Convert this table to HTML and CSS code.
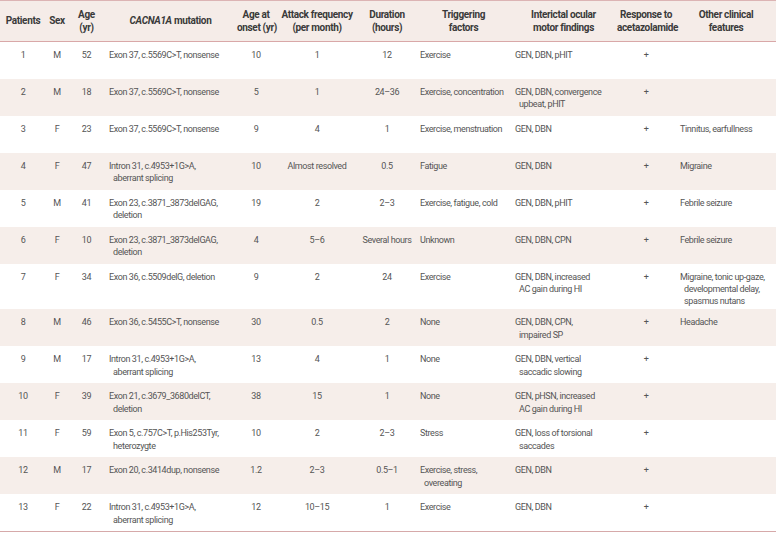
FILE: index.html
```html
<!DOCTYPE html>
<html lang="en">
<head>
<meta charset="utf-8">
<title>CACNA1A patients</title>
<link rel="stylesheet" href="styles.css">
</head>
<body>
<table class="tbl">
  <colgroup>
    <col class="c-pt"><col class="c-sex"><col class="c-age"><col class="c-mut"><col class="c-onset"><col class="c-freq"><col class="c-dur"><col class="c-trig"><col class="c-ocul"><col class="c-resp"><col class="c-other">
  </colgroup>
  <thead>
    <tr>
      <th>Patients</th>
      <th>Sex</th>
      <th>Age<br>(yr)</th>
      <th><i>CACNA1A</i> mutation</th>
      <th>Age at<br>onset (yr)</th>
      <th>Attack frequency<br>(per month)</th>
      <th>Duration<br>(hours)</th>
      <th>Triggering<br>factors</th>
      <th>Interictal ocular<br>motor findings</th>
      <th>Response to<br>acetazolamide</th>
      <th>Other clinical<br>features</th>
    </tr>
  </thead>
  <tbody>
    <tr>
      <td class="c">1</td><td class="c">M</td><td class="c">52</td>
      <td class="l mut">Exon 37, c.5569C&gt;T, nonsense</td>
      <td class="c">10</td><td class="c">1</td><td class="c">12</td>
      <td class="l">Exercise</td>
      <td class="l ocul">GEN, DBN, pHIT</td>
      <td class="c">+</td><td class="l"></td>
    </tr>
    <tr class="band">
      <td class="c">2</td><td class="c">M</td><td class="c">18</td>
      <td class="l mut">Exon 37, c.5569C&gt;T, nonsense</td>
      <td class="c">5</td><td class="c">1</td><td class="c">24–36</td>
      <td class="l">Exercise, concentration</td>
      <td class="l ocul">GEN, DBN, convergence upbeat, pHIT</td>
      <td class="c">+</td><td class="l"></td>
    </tr>
    <tr>
      <td class="c">3</td><td class="c">F</td><td class="c">23</td>
      <td class="l mut">Exon 37, c.5569C&gt;T, nonsense</td>
      <td class="c">9</td><td class="c">4</td><td class="c">1</td>
      <td class="l">Exercise, menstruation</td>
      <td class="l ocul">GEN, DBN</td>
      <td class="c">+</td><td class="l">Tinnitus, earfullness</td>
    </tr>
    <tr class="band">
      <td class="c">4</td><td class="c">F</td><td class="c">47</td>
      <td class="l mut">Intron 31, c.4953+1G&gt;A, aberrant splicing</td>
      <td class="c">10</td><td class="c">Almost resolved</td><td class="c">0.5</td>
      <td class="l">Fatigue</td>
      <td class="l ocul">GEN, DBN</td>
      <td class="c">+</td><td class="l">Migraine</td>
    </tr>
    <tr>
      <td class="c">5</td><td class="c">M</td><td class="c">41</td>
      <td class="l mut">Exon 23, c.3871_3873delGAG, deletion</td>
      <td class="c">19</td><td class="c">2</td><td class="c">2–3</td>
      <td class="l">Exercise, fatigue, cold</td>
      <td class="l ocul">GEN, DBN, pHIT</td>
      <td class="c">+</td><td class="l">Febrile seizure</td>
    </tr>
    <tr class="band">
      <td class="c">6</td><td class="c">F</td><td class="c">10</td>
      <td class="l mut">Exon 23, c.3871_3873delGAG, deletion</td>
      <td class="c">4</td><td class="c">5–6</td><td class="c nw">Several hours</td>
      <td class="l">Unknown</td>
      <td class="l ocul">GEN, DBN, CPN</td>
      <td class="c">+</td><td class="l">Febrile seizure</td>
    </tr>
    <tr>
      <td class="c">7</td><td class="c">F</td><td class="c">34</td>
      <td class="l mut">Exon 36, c.5509delG, deletion</td>
      <td class="c">9</td><td class="c">2</td><td class="c">24</td>
      <td class="l">Exercise</td>
      <td class="l ocul">GEN, DBN, increased<br>AC gain during HI</td>
      <td class="c">+</td><td class="l">Migraine, tonic up-gaze, developmental delay, spasmus nutans</td>
    </tr>
    <tr class="band">
      <td class="c">8</td><td class="c">M</td><td class="c">46</td>
      <td class="l mut">Exon 36, c.5455C&gt;T, nonsense</td>
      <td class="c">30</td><td class="c">0.5</td><td class="c">2</td>
      <td class="l">None</td>
      <td class="l ocul">GEN, DBN, CPN, impaired SP</td>
      <td class="c">+</td><td class="l">Headache</td>
    </tr>
    <tr>
      <td class="c">9</td><td class="c">M</td><td class="c">17</td>
      <td class="l mut">Intron 31, c.4953+1G&gt;A, aberrant splicing</td>
      <td class="c">13</td><td class="c">4</td><td class="c">1</td>
      <td class="l">None</td>
      <td class="l ocul">GEN, DBN, vertical saccadic slowing</td>
      <td class="c">+</td><td class="l"></td>
    </tr>
    <tr class="band">
      <td class="c">10</td><td class="c">F</td><td class="c">39</td>
      <td class="l mut">Exon 21, c.3679_3680delCT, deletion</td>
      <td class="c">38</td><td class="c">15</td><td class="c">1</td>
      <td class="l">None</td>
      <td class="l ocul">GEN, pHSN, increased<br>AC gain during HI</td>
      <td class="c">+</td><td class="l"></td>
    </tr>
    <tr>
      <td class="c">11</td><td class="c">F</td><td class="c">59</td>
      <td class="l mut">Exon 5, c.757C&gt;T, p.His253Tyr, heterozygte</td>
      <td class="c">10</td><td class="c">2</td><td class="c">2–3</td>
      <td class="l">Stress</td>
      <td class="l ocul">GEN, loss of torsional saccades</td>
      <td class="c">+</td><td class="l"></td>
    </tr>
    <tr class="band">
      <td class="c">12</td><td class="c">M</td><td class="c">17</td>
      <td class="l mut">Exon 20, c.3414dup, nonsense</td>
      <td class="c">1.2</td><td class="c">2–3</td><td class="c">0.5–1</td>
      <td class="l">Exercise, stress, overeating</td>
      <td class="l ocul">GEN, DBN</td>
      <td class="c">+</td><td class="l"></td>
    </tr>
    <tr>
      <td class="c">13</td><td class="c">F</td><td class="c">22</td>
      <td class="l mut">Intron 31, c.4953+1G&gt;A, aberrant splicing</td>
      <td class="c">12</td><td class="c">10–15</td><td class="c">1</td>
      <td class="l">Exercise</td>
      <td class="l ocul">GEN, DBN</td>
      <td class="c">+</td><td class="l"></td>
    </tr>
  </tbody>
</table>
</body>
</html>
```

FILE: styles.css
```css
html, body {
  margin: 0;
  padding: 0;
  background: #ffffff;
}

.tbl {
  width: 776px;
  border-collapse: collapse;
  table-layout: fixed;
  font-family: Roboto, "Liberation Sans", sans-serif;
  color: #555555;
  border-top: 1px solid #dcb4b4;
  border-bottom: 1.5px solid #d6a9a9;
}

.c-pt { width: 46px; }
.c-sex { width: 22px; }
.c-age { width: 37px; }
.c-mut { width: 131px; }
.c-onset { width: 40px; }
.c-freq { width: 82px; }
.c-dur { width: 58px; }
.c-trig { width: 95px; }
.c-ocul { width: 105px; }
.c-resp { width: 60px; }
.c-other { width: 100px; }

.tbl thead tr {
  background: #f5ece8;
  border-bottom: 1.5px solid #d9a8a8;
}

.tbl th {
  height: 40px;
  padding: 0 1px;
  font-size: 10px;
  line-height: 13.5px;
  letter-spacing: -0.35px;
  font-weight: 700;
  color: #3a3a3a;
  text-align: center;
  vertical-align: middle;
  white-space: nowrap;
}

.tbl th i {
  font-style: italic;
}

.tbl tbody tr {
  height: 37px;
}

.tbl tbody tr.band {
  background: #f6eeea;
}

.tbl td {
  padding: 7px 1px 2px 1px;
  font-size: 9px;
  line-height: 12.3px;
  letter-spacing: -0.4px;
  font-weight: 400;
  vertical-align: top;
}

.tbl td.c {
  text-align: center;
}

.tbl td.nw {
  white-space: nowrap;
}

.tbl td.l {
  text-align: left;
  padding-left: 8px;
  text-indent: -4px;
}

.tbl td.mut,
.tbl td.ocul {
  padding-right: 12px;
}
```
